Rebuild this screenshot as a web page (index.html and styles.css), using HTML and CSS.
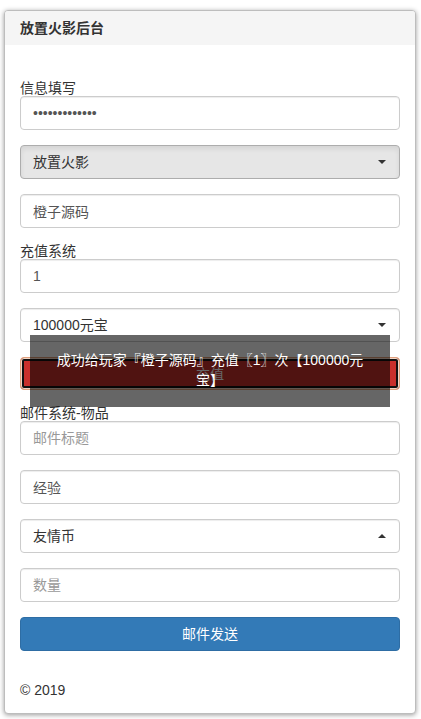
FILE: index.html
```html
<!DOCTYPE html>
<html lang="zh-CN">
<head>
<meta charset="utf-8">
<title>放置火影后台</title>
<link rel="stylesheet" href="styles.css">
</head>
<body>
<div class="page">
  <div class="panel">
    <div class="panel-heading">放置火影后台</div>
    <div class="panel-body">
      <div class="form-group">
        <label class="label">信息填写</label>
        <input class="form-control" type="password" value="1234567890123">
      </div>
      <div class="form-group">
        <div class="form-control select select-active"><span>放置火影</span><span class="caret"></span></div>
      </div>
      <div class="form-group">
        <input class="form-control" type="text" value="橙子源码">
      </div>
      <div class="form-group">
        <label class="label">充值系统</label>
        <input class="form-control" type="text" value="1">
      </div>
      <div class="form-group">
        <div class="form-control select"><span>100000元宝</span><span class="caret"></span></div>
      </div>
      <div class="form-group">
        <button class="btn btn-danger" type="button">充值</button>
      </div>
      <div class="form-group">
        <label class="label">邮件系统-物品</label>
        <input class="form-control" type="text" placeholder="邮件标题">
      </div>
      <div class="form-group">
        <input class="form-control" type="text" value="经验">
      </div>
      <div class="form-group">
        <div class="form-control select"><span>友情币</span><span class="caret caret-up"></span></div>
      </div>
      <div class="form-group">
        <input class="form-control" type="text" placeholder="数量">
      </div>
      <button class="btn btn-primary" type="button">邮件发送</button>
      <div class="footer">© 2019</div>
    </div>
  </div>
  <div class="toast">成功给玩家『橙子源码』充值〖1〗次【100000元宝】</div>
</div>
</body>
</html>
```
FILE: styles.css
```css
* { box-sizing: border-box; }
html, body {
  margin: 0;
  padding: 0;
  background: #fff;
}
body {
  font-family: "Liberation Sans", "Noto Sans CJK SC", sans-serif;
  font-size: 14px;
  color: #333;
}
.page {
  position: relative;
  padding: 10px 5px 6px 4px;
}
.panel {
  width: 412px;
  background: #fff;
  border: 1px solid #bdbdbd;
  border-radius: 4px;
  box-shadow: 0 1px 5px rgba(0, 0, 0, 0.4);
  overflow: hidden;
}
.panel-heading {
  height: 34px;
  line-height: 34px;
  padding: 0 15px;
  background: #f5f5f5;
  font-weight: bold;
  font-size: 14px;
  color: #333;
}
.panel-body {
  padding: 35px 15px 13px;
}
.form-group {
  margin-bottom: 15px;
}
.label {
  display: block;
  line-height: 16px;
  font-size: 14px;
  color: #333;
}
.form-control {
  display: block;
  width: 100%;
  height: 34px;
  padding: 6px 12px;
  font-family: "Liberation Sans", "Noto Sans CJK SC", sans-serif;
  font-size: 14px;
  line-height: 20px;
  color: #555;
  background: #fff;
  border: 1px solid #ccc;
  border-radius: 4px;
  box-shadow: inset 0 1px 1px rgba(0, 0, 0, 0.075);
  outline: none;
  margin: 0;
}
.form-control::placeholder {
  color: #999;
}
.select {
  display: flex;
  align-items: center;
  justify-content: space-between;
  color: #333;
  padding-right: 13px;
}
.select-active {
  background: #e6e6e6;
  border-color: #adadad;
  box-shadow: inset 0 3px 5px rgba(0, 0, 0, 0.08);
}
.caret {
  width: 0;
  height: 0;
  border-top: 4px solid #333;
  border-left: 4px solid transparent;
  border-right: 4px solid transparent;
}
.caret-up {
  border-top: 0;
  border-bottom: 4px solid #333;
}
.btn {
  display: block;
  width: 100%;
  height: 34px;
  padding: 6px 12px;
  font-family: "Liberation Sans", "Noto Sans CJK SC", sans-serif;
  font-size: 14px;
  line-height: 20px;
  text-align: center;
  border: 1px solid transparent;
  border-radius: 4px;
  color: #fff;
  cursor: pointer;
  margin: 0;
}
.btn-danger {
  height: 33px;
  padding: 5px 12px;
  background: #c9302c;
  border-color: #e0a07c;
  box-shadow: inset 0 0 0 1px #f2d6c8, inset 0 0 0 3px #111;
}
.btn-primary {
  background: #337ab7;
  border-color: #2e6da4;
}
.footer {
  margin-top: 29px;
  line-height: 20px;
  font-size: 14px;
  color: #333;
}
.toast {
  position: absolute;
  left: 30px;
  top: 335px;
  width: 360px;
  height: 72px;
  padding: 15px 20px 0;
  background: rgba(0, 0, 0, 0.6);
  color: #fff;
  font-size: 14px;
  line-height: 20px;
  text-align: center;
}
```
